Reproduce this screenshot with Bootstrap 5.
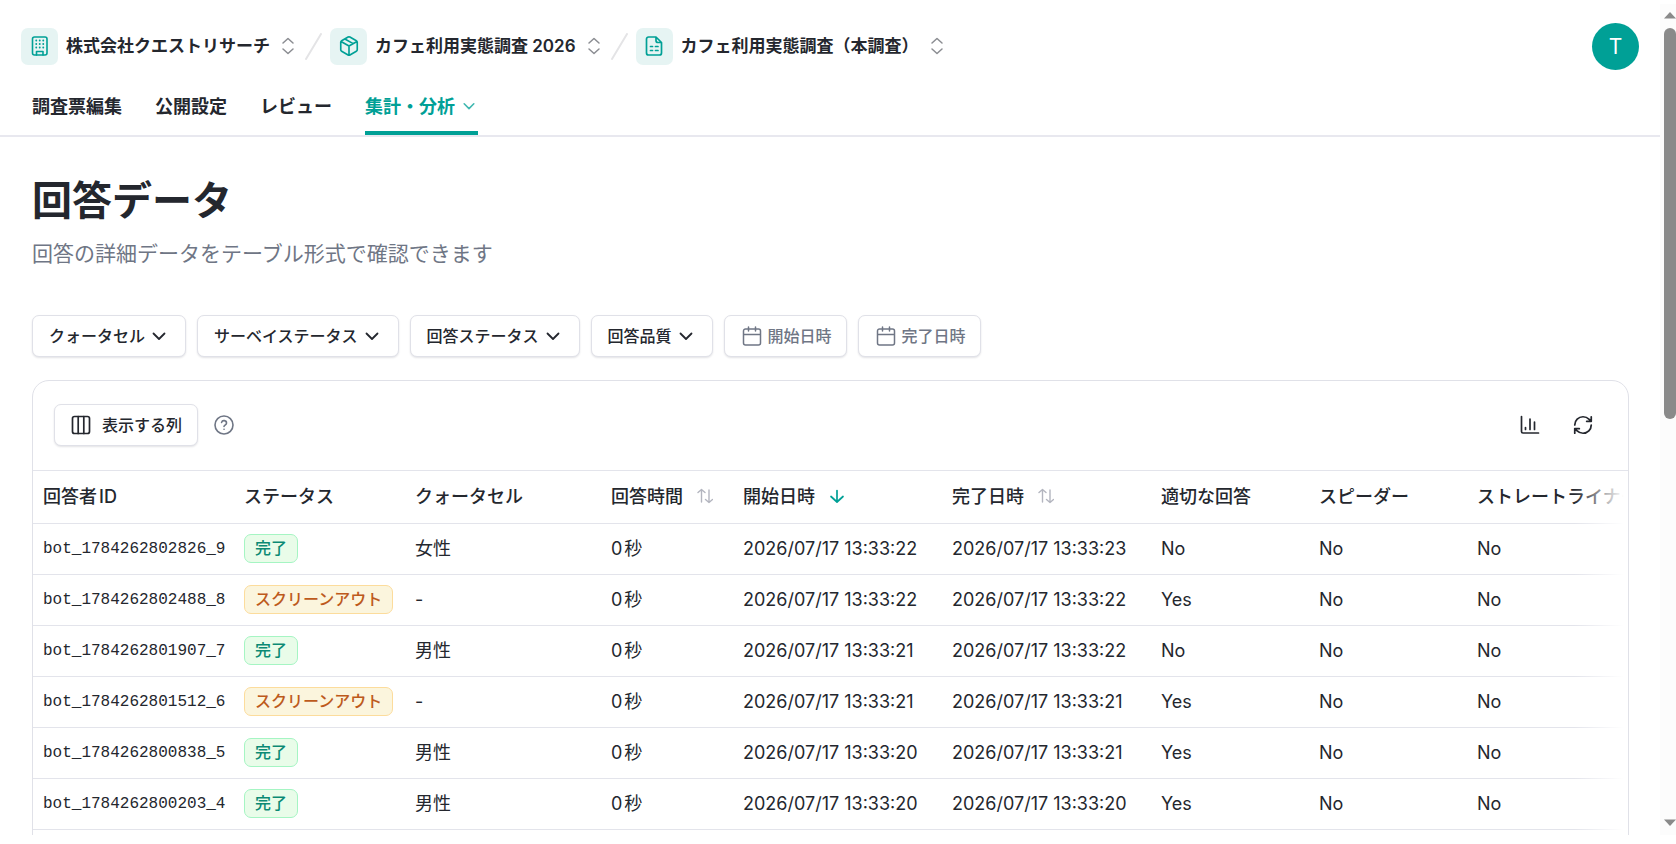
<!DOCTYPE html>
<html lang="ja">
<head>
<meta charset="utf-8">
<meta name="viewport" content="width=device-width, initial-scale=1">
<title>回答データ</title>
<link href="https://cdn.jsdelivr.net/npm/bootstrap@5.3.0/dist/css/bootstrap.min.css" rel="stylesheet">
<style>
  :root { --ink: #24272e; --muted: #6f7685; --line: #e3e4eb; --teal: #00a096; }
  body { font-family: Inter, "Noto Sans CJK JP", sans-serif; color: var(--ink); font-size: 18px; line-height: 27px; background: #fff; }
  svg { display: block; flex: none; fill: none; stroke: currentColor; stroke-linecap: round; stroke-linejoin: round; }
  .app-shell { padding-bottom: 9px; }
  .gutter { padding-left: 32px; padding-right: 31px; }
  .tool { padding: 0; border: 0; background: none; color: var(--ink); }

  .topbar { padding-top: 22px; border-bottom: 2px solid #e8e8ef; }
  .crumbs { padding: 0 21px; height: 48px; }
  .crumb-list { gap: 8px; }
  .crumb { gap: 8px; color: var(--ink); font-size: 17px; font-weight: 600; }
  .crumb-icon { width: 37px; height: 37px; border-radius: 7px; background: #e6f4f3; color: var(--teal); }
  .crumb-switch { color: #8b8d92; margin-left: 1px; }
  .slash { color: #e4e4e6; }
  .avatar { width: 47px; height: 47px; background: var(--teal); font-size: 21px; line-height: 47px; }

  .tabs { gap: 33px; margin-top: 7px; }
  .tab-link { height: 58px; gap: 7px; color: var(--ink); font-weight: 600; border-top: 4px solid transparent; border-bottom: 4px solid transparent; }
  .tab-link.active { color: var(--teal); border-bottom-color: var(--teal); padding-right: 2px; }

  .page-title { font-size: 40px; line-height: 56px; font-weight: 700; margin: 36px 0 9px; }
  .page-lead { font-size: 21px; line-height: 32px; color: var(--muted); margin: 0 0 45px; }

  .filters { gap: 11px; margin-bottom: 23px; }
  .pill { display: inline-flex; align-items: center; gap: 6px; height: 42px; padding: 0 18px 0 16px; font-size: 16px; font-weight: 500; line-height: 24px; color: var(--ink); background: #fff; border: 1px solid #e0e1e8; border-radius: 7px; box-shadow: 0 1px 2px rgba(20, 20, 40, .12); }
  .pill-date { color: var(--muted); padding: 0 14px 0 17px; }
  .pill-cols { gap: 11px; padding: 0 15px 0 16px; }

  .panel { border: 1px solid #e0e1e8; border-radius: 17px; padding-bottom: 40px; }
  .panel-tools { padding: 23px 34px 24px 21px; }
  .tool-help { color: var(--muted); margin-left: 16px; }
  .tools-right { gap: 32px; }

  .grid-wrap { overflow: hidden; }
  .grid-wrap::after { content: ""; position: absolute; inset: 1px 0 0 auto; width: 54px; background: linear-gradient(to right, rgba(255,255,255,0), #fff 92%); }
  .answers { table-layout: fixed; min-width: 1617px; margin: 0; --bs-table-color: var(--ink); color: var(--ink); border-top: 1px solid var(--line); }
  .answers > :not(caption) > * > * { padding: 0 10px 2px; height: 51px; vertical-align: middle; white-space: nowrap; border-bottom: 1px solid var(--line); }
  .answers > thead > tr > th { height: 53px; font-weight: 500; }
  .answers > tbody > tr > .mono-id { font-family: "Liberation Mono", monospace; font-size: 16px; padding-bottom: 0; }
  .num { margin-right: 2px; }
  .sort { gap: 14px; padding: 0; border: 0; background: none; font-weight: 500; color: inherit; }
  .sort svg { color: #b3b5bf; }
  .sort.on svg { color: var(--teal); }
  .c-id { width: 201px; } .c-st { width: 171px; } .c-quota { width: 196px; } .c-time { width: 132px; }
  .c-date { width: 209px; } .c-flag { width: 158px; }
  .state { display: inline-block; padding: 1px 10px; border: 1px solid; border-radius: 7px; font-size: 16px; line-height: 25px; font-weight: 500; vertical-align: middle; }
  .state-done { color: #0b8a74; background: #e9fce9; border-color: #a5f5c3; }
  .state-out { color: #bd5a1c; background: #fbf5dd; border-color: #fcdc9c; }

  .rail { width: 16px; margin-top: 4px; background: #fcfcfc; padding: 8px 0 9px 4px; color: #8a8a8a; }
  .rail svg { fill: currentColor; stroke: none; }
  .rail-thumb { width: 12px; height: 48%; border-radius: 6px; background: #8a8a8a; margin-top: 9px; }
</style>
</head>
<body>
<svg width="0" height="0" class="position-absolute" aria-hidden="true">
  <symbol id="i-switch" viewBox="0 0 18 18"><path d="M4 6l5-4.500 5 4.500M4 12l5 4.500 5-4.500" stroke-width="1.500"/></symbol>
  <symbol id="i-slash" viewBox="0 0 17 27"><path d="M16 1L1 26" stroke-width="2"/></symbol>
  <symbol id="i-down" viewBox="0 0 16 16"><path d="M2.500 5.500L8 11l5.500-5.500" stroke-width="1.800"/></symbol>
  <symbol id="i-cal" viewBox="0 0 20 20"><path d="M3.500 3h13a2 2 0 0 1 2 2v12a2 2 0 0 1-2 2h-13a2 2 0 0 1-2-2V5a2 2 0 0 1 2-2zM1.500 8.500h17M6.500 1v4M13.500 1v4" stroke-width="1.500"/></symbol>
  <symbol id="i-sort" viewBox="0 0 16 16"><path d="M1 4.500L4.500 1.500 8 4.500M4.500 1.500V14M8.500 11.500L12 14.500l3.500-3M12 14.500V2" stroke-width="1.400"/></symbol>
  <symbol id="i-arrow" viewBox="0 0 16 16"><path d="M8 2.500v11.500M2 8.500L8 14l6-5.500" stroke-width="1.700"/></symbol>
</svg>

<div class="app-shell d-flex vh-100 overflow-hidden">
  <div class="flex-grow-1 overflow-hidden">
    <header class="topbar">
      <div class="crumbs d-flex align-items-center justify-content-between">
        <div class="crumb-list d-flex align-items-center">
          <a href="#" class="crumb d-flex align-items-center text-decoration-none">
            <span class="crumb-icon d-flex align-items-center justify-content-center">
              <svg width="20" height="22" viewBox="0 0 20 22" stroke-width="1.600"><rect x="2.500" y="2" width="14.500" height="18" rx="2"/><path d="M6.500 20v-3.500H13V20"/><path d="M6.200 5.500h.1M9.700 5.500h.1M13.200 5.500h.1M6.200 9h.1M9.700 9h.1M13.200 9h.1M6.200 12.500h.1M9.700 12.500h.1M13.200 12.500h.1" stroke-width="1.800"/></svg>
            </span>株式会社クエストリサーチ</a>
          <button class="tool crumb-switch" aria-label="会社を切り替え"><svg width="18" height="18"><use href="#i-switch"/></svg></button>
          <svg class="slash" width="17" height="27"><use href="#i-slash"/></svg>
          <a href="#" class="crumb d-flex align-items-center text-decoration-none">
            <span class="crumb-icon d-flex align-items-center justify-content-center">
              <svg width="22" height="22" viewBox="0 0 24 24" stroke-width="1.800"><path d="M21 8a2 2 0 0 0-1-1.730l-7-4a2 2 0 0 0-2 0l-7 4A2 2 0 0 0 3 8v8a2 2 0 0 0 1 1.730l7 4a2 2 0 0 0 2 0l7-4A2 2 0 0 0 21 16zM3.300 7L12 12l8.700-5M12 22V12M7.500 4.300l9 5.100"/></svg>
            </span>カフェ利用実態調査 2026</a>
          <button class="tool crumb-switch" aria-label="プロジェクトを切り替え"><svg width="18" height="18"><use href="#i-switch"/></svg></button>
          <svg class="slash" width="17" height="27"><use href="#i-slash"/></svg>
          <a href="#" class="crumb d-flex align-items-center text-decoration-none">
            <span class="crumb-icon d-flex align-items-center justify-content-center">
              <svg width="20" height="22" viewBox="0 0 20 22" stroke-width="1.700"><path d="M12 2H4.500a2 2 0 0 0-2 2v14a2 2 0 0 0 2 2h11a2 2 0 0 0 2-2V7.500zM12 2v3.500a2 2 0 0 0 2 2h3.500M6.500 11.500h2M11.500 11.500h2.500M6.500 15.500h2M11.500 15.500h2.500"/></svg>
            </span>カフェ利用実態調査（本調査）</a>
          <button class="tool crumb-switch" aria-label="調査を切り替え"><svg width="18" height="18"><use href="#i-switch"/></svg></button>
        </div>
        <button class="tool avatar rounded-circle text-white text-center">T</button>
      </div>
      <nav class="tabs gutter d-flex">
        <a href="#" class="tab-link d-flex align-items-center text-decoration-none">調査票編集</a>
        <a href="#" class="tab-link d-flex align-items-center text-decoration-none">公開設定</a>
        <a href="#" class="tab-link d-flex align-items-center text-decoration-none">レビュー</a>
        <a href="#" class="tab-link active d-flex align-items-center text-decoration-none" aria-current="page">集計・分析<svg width="14" height="14" class="opacity-75"><use href="#i-down"/></svg></a>
      </nav>
    </header>

    <main class="gutter">
      <h1 class="page-title">回答データ</h1>
      <p class="page-lead">回答の詳細データをテーブル形式で確認できます</p>

      <div class="filters d-flex flex-wrap">
        <button class="pill">クォータセル<svg width="16" height="16"><use href="#i-down"/></svg></button>
        <button class="pill">サーベイステータス<svg width="16" height="16"><use href="#i-down"/></svg></button>
        <button class="pill">回答ステータス<svg width="16" height="16"><use href="#i-down"/></svg></button>
        <button class="pill">回答品質<svg width="16" height="16"><use href="#i-down"/></svg></button>
        <button class="pill pill-date"><svg width="20" height="20"><use href="#i-cal"/></svg>開始日時</button>
        <button class="pill pill-date"><svg width="20" height="20"><use href="#i-cal"/></svg>完了日時</button>
      </div>

      <section class="panel">
        <div class="panel-tools d-flex align-items-center">
          <button class="pill pill-cols"><svg width="20" height="20" viewBox="0 0 20 20" stroke-width="1.700"><rect x="1.500" y="1.500" width="17" height="17" rx="2"/><path d="M7.200 1.500v17M12.800 1.500v17"/></svg>表示する列</button>
          <button class="tool tool-help" aria-label="ヘルプ"><svg width="20" height="20" viewBox="0 0 20 20" stroke-width="1.600"><circle cx="10" cy="10" r="9"/><path d="M7.600 7.400a2.500 2.500 0 0 1 4.900.8c0 1.700-2.500 2.100-2.500 3.300M10 14.300h.1"/></svg></button>
          <div class="tools-right d-flex align-items-center ms-auto">
            <button class="tool" aria-label="グラフ"><svg width="20" height="20" viewBox="0 0 20 20" stroke-width="1.700"><path d="M1.500 1.500v15a1.500 1.500 0 0 0 1.500 1.500h15.500M5.500 14.500v-2M10 14.500V4M14.500 14.500V7"/></svg></button>
            <button class="tool" aria-label="更新"><svg width="22" height="22" viewBox="0 0 24 24" stroke-width="1.900"><path d="M3 12a9 9 0 0 1 9-9 9.750 9.750 0 0 1 6.740 2.740L21 8M21 3v5h-5M21 12a9 9 0 0 1-9 9 9.750 9.750 0 0 1-6.740-2.740L3 16M8 16H3v5"/></svg></button>
          </div>
        </div>
        <div class="grid-wrap position-relative">
          <table class="table answers">
            <colgroup><col class="c-id"><col class="c-st"><col class="c-quota"><col class="c-time"><col class="c-date"><col class="c-date"><col class="c-flag"><col class="c-flag"><col></colgroup>
            <thead>
              <tr>
                <th scope="col"><span class="num">回答者</span>ID</th>
                <th scope="col">ステータス</th>
                <th scope="col">クォータセル</th>
                <th scope="col"><button class="sort d-flex align-items-center">回答時間<svg width="16" height="16"><use href="#i-sort"/></svg></button></th>
                <th scope="col" aria-sort="descending"><button class="sort on d-flex align-items-center">開始日時<svg width="16" height="16"><use href="#i-arrow"/></svg></button></th>
                <th scope="col"><button class="sort d-flex align-items-center">完了日時<svg width="16" height="16"><use href="#i-sort"/></svg></button></th>
                <th scope="col">適切な回答</th>
                <th scope="col">スピーダー</th>
                <th scope="col">ストレートライナー</th>
              </tr>
            </thead>
            <tbody>
              <tr><td class="mono-id">bot_1784262802826_9</td><td><span class="state state-done">完了</span></td><td>女性</td><td><span class="num">0</span>秒</td><td>2026/07/17 13:33:22</td><td>2026/07/17 13:33:23</td><td>No</td><td>No</td><td>No</td></tr>
              <tr><td class="mono-id">bot_1784262802488_8</td><td><span class="state state-out">スクリーンアウト</span></td><td>-</td><td><span class="num">0</span>秒</td><td>2026/07/17 13:33:22</td><td>2026/07/17 13:33:22</td><td>Yes</td><td>No</td><td>No</td></tr>
              <tr><td class="mono-id">bot_1784262801907_7</td><td><span class="state state-done">完了</span></td><td>男性</td><td><span class="num">0</span>秒</td><td>2026/07/17 13:33:21</td><td>2026/07/17 13:33:22</td><td>No</td><td>No</td><td>No</td></tr>
              <tr><td class="mono-id">bot_1784262801512_6</td><td><span class="state state-out">スクリーンアウト</span></td><td>-</td><td><span class="num">0</span>秒</td><td>2026/07/17 13:33:21</td><td>2026/07/17 13:33:21</td><td>Yes</td><td>No</td><td>No</td></tr>
              <tr><td class="mono-id">bot_1784262800838_5</td><td><span class="state state-done">完了</span></td><td>男性</td><td><span class="num">0</span>秒</td><td>2026/07/17 13:33:20</td><td>2026/07/17 13:33:21</td><td>Yes</td><td>No</td><td>No</td></tr>
              <tr><td class="mono-id">bot_1784262800203_4</td><td><span class="state state-done">完了</span></td><td>男性</td><td><span class="num">0</span>秒</td><td>2026/07/17 13:33:20</td><td>2026/07/17 13:33:20</td><td>Yes</td><td>No</td><td>No</td></tr>
            </tbody>
          </table>
        </div>
      </section>
    </main>
  </div>

  <div class="rail d-flex flex-column flex-shrink-0" aria-hidden="true">
    <svg width="12" height="7" viewBox="0 0 12 7"><path d="M6 0l6 6.500H0z"/></svg>
    <div class="rail-thumb"></div>
    <svg width="12" height="7" viewBox="0 0 12 7" class="mt-auto"><path d="M6 7L0 .5h12z"/></svg>
  </div>
</div>
<script src="https://cdn.jsdelivr.net/npm/bootstrap@5.3.0/dist/js/bootstrap.bundle.min.js"></script>
</body>
</html>
